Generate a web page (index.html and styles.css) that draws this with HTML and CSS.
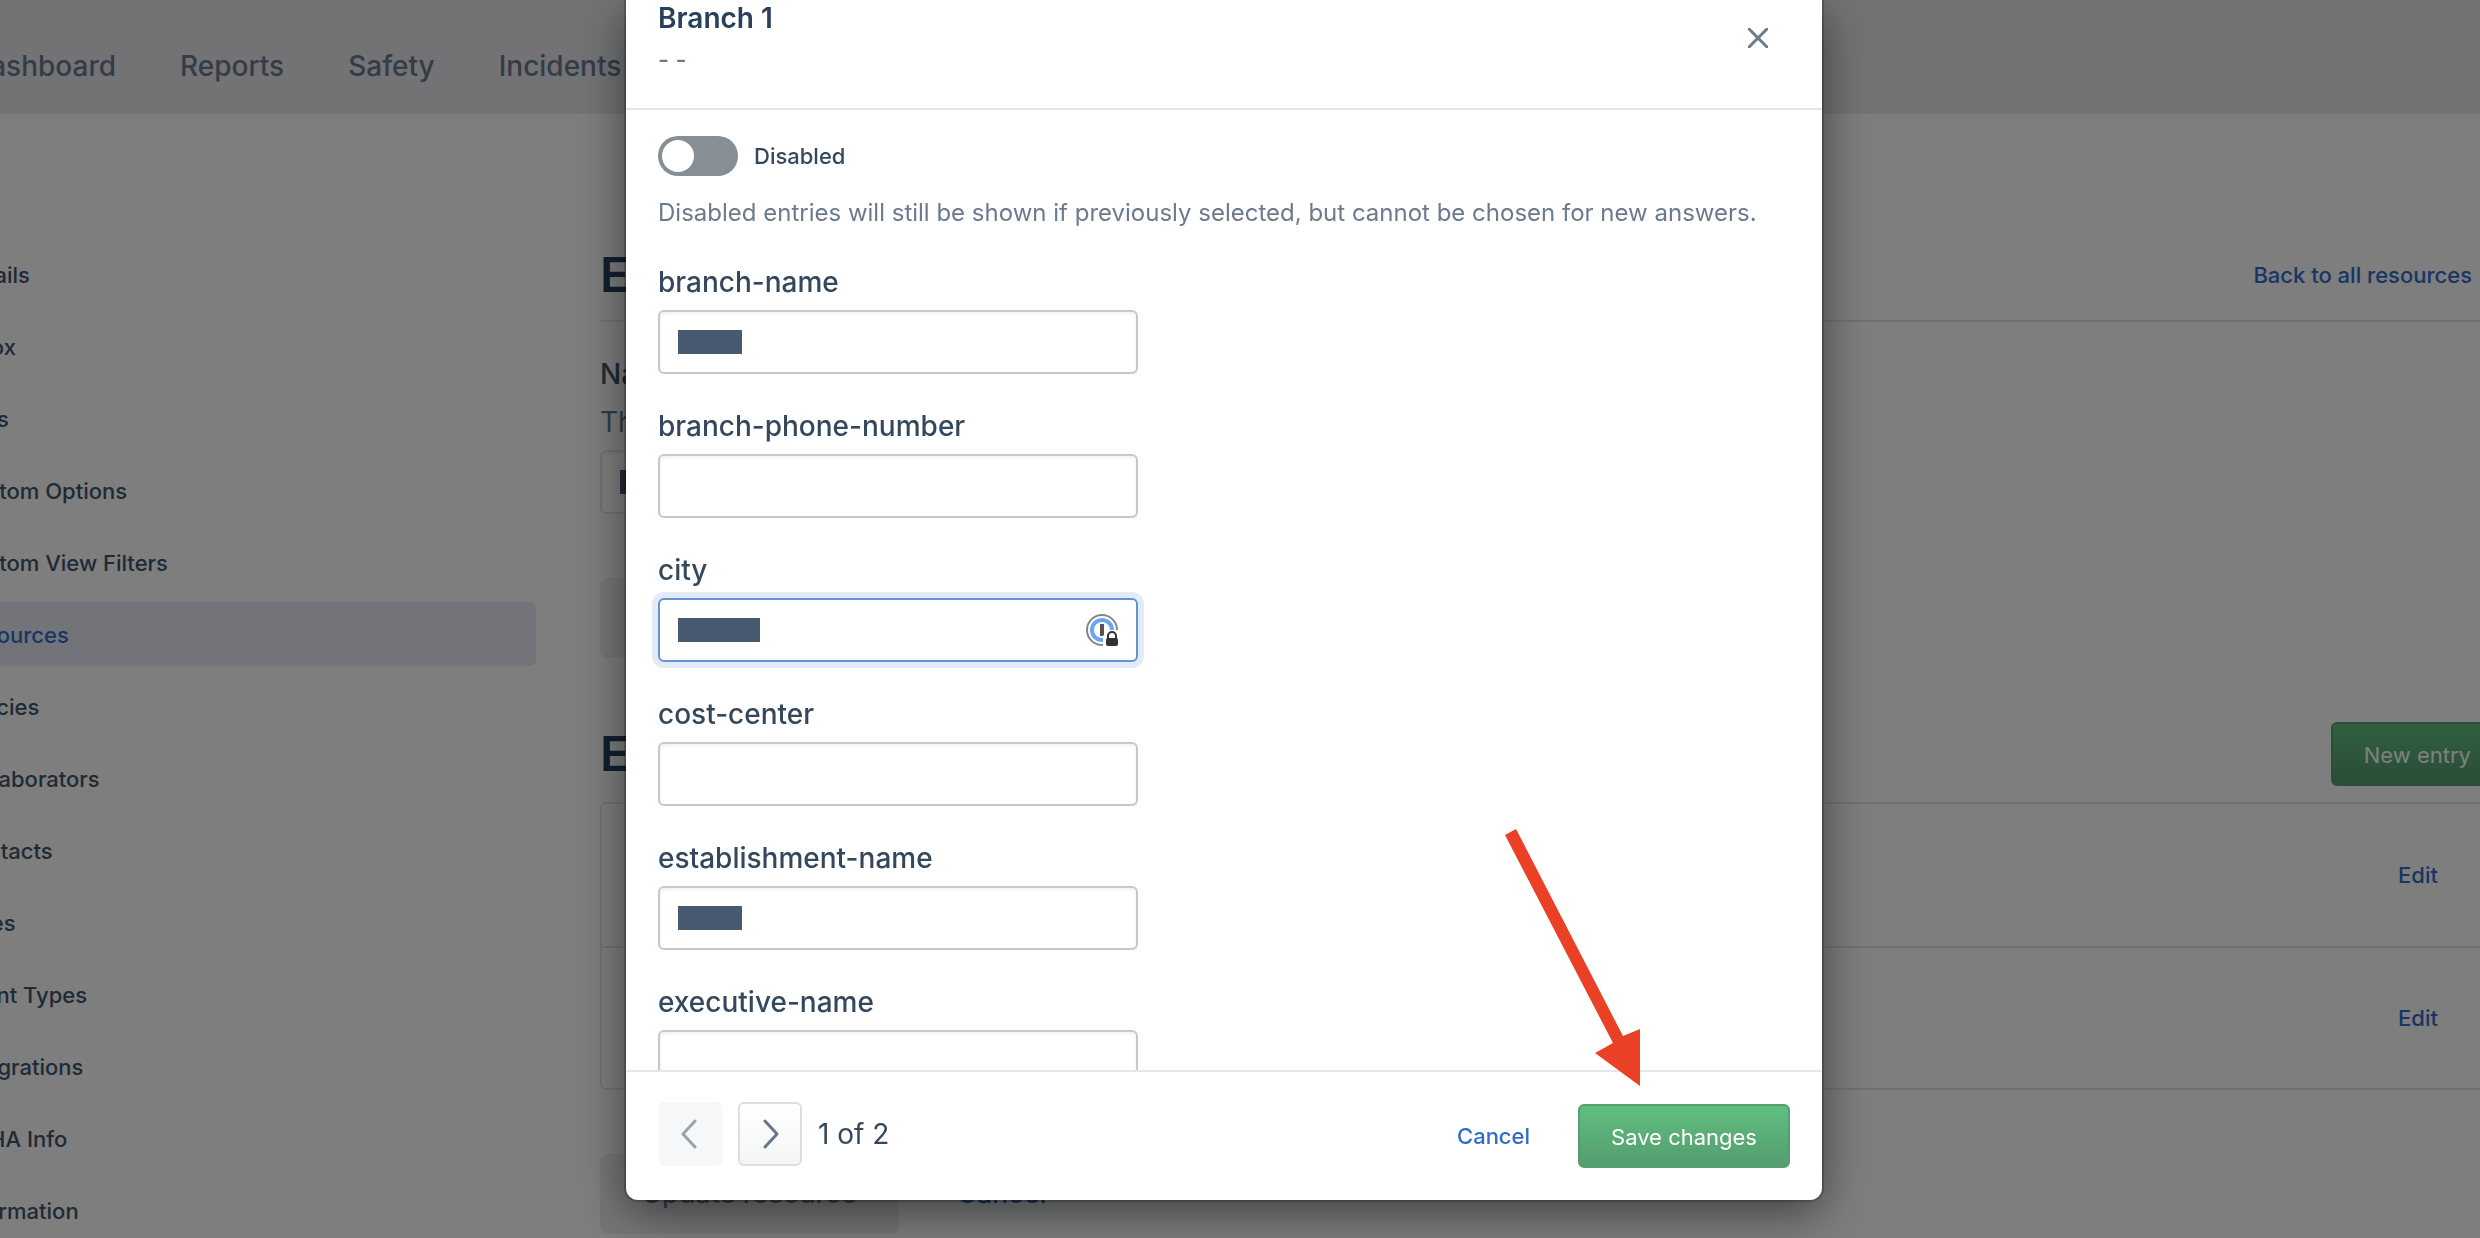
FILE: index.html
```html
<!DOCTYPE html>
<html lang="en">
<head>
<meta charset="utf-8">
<title>Edit resource entry</title>
<link rel="stylesheet" href="styles.css">
</head>
<body>
<div class="page">
  <header class="topbar">
    <nav class="topnav">
      <a href="#">Dashboard</a>
      <a href="#">Reports</a>
      <a href="#">Safety</a>
      <a href="#">Incidents</a>
    </nav>
  </header>
  <div class="layout">
    <nav class="sidebar">
      <a href="#">Details</a>
      <a href="#">Inbox</a>
      <a href="#">Tags</a>
      <a href="#">Custom Options</a>
      <a href="#">Custom View Filters</a>
      <a href="#" class="active">Resources</a>
      <a href="#">Policies</a>
      <a href="#">Collaborators</a>
      <a href="#">Contacts</a>
      <a href="#">Roles</a>
      <a href="#">Event Types</a>
      <a href="#">Integrations</a>
      <a href="#">OSHA Info</a>
      <a href="#">Information</a>
    </nav>
    <main class="content">
      <div class="content-head">
        <h1>Edit</h1>
        <a href="#" class="link">Back to all resources</a>
      </div>
      <div class="name-field">
        <label for="resource-name">Name</label>
        <p>The</p>
        <div class="input-wrap">
          <input id="resource-name" type="text" class="input">
          <span class="mask"></span>
        </div>
      </div>
      <button type="button" class="btn-muted" disabled>Update</button>
      <div class="entries-head">
        <h2>Entries</h2>
        <button type="button" class="btn-green">New entry</button>
      </div>
      <ul class="entries">
        <li><a href="#" class="link">Edit</a></li>
        <li><a href="#" class="link">Edit</a></li>
      </ul>
      <div class="content-actions">
        <button type="button" class="btn-muted" disabled>Update resource</button>
        <a href="#" class="link link-large">Cancel</a>
      </div>
    </main>
  </div>
</div>

<div class="overlay">
  <section class="modal" role="dialog" aria-labelledby="modal-title">
    <header class="modal-head">
      <div>
        <h2 id="modal-title">Branch 1</h2>
        <p>- -</p>
      </div>
      <button type="button" class="close" aria-label="Close">
        <svg width="20" height="20" viewBox="0 0 20 20" fill="none" stroke="currentColor" stroke-width="3" stroke-linecap="round"><path d="M1 1 19 19M19 1 1 19"/></svg>
      </button>
    </header>
    <form class="modal-body">
      <label class="toggle"><input type="checkbox" role="switch"><span>Disabled</span></label>
      <p class="help">Disabled entries will still be shown if previously selected, but cannot be chosen for new answers.</p>
      <div class="field">
        <label for="branch-name">branch-name</label>
        <div class="input-wrap"><input id="branch-name" type="text" class="input"><span class="mask"></span></div>
      </div>
      <div class="field">
        <label for="branch-phone">branch-phone-number</label>
        <div class="input-wrap"><input id="branch-phone" type="text" class="input"></div>
      </div>
      <div class="field">
        <label for="city">city</label>
        <div class="input-wrap">
          <input id="city" type="text" class="input focused">
          <span class="mask mask-wide"></span>
          <svg class="vault" width="34" height="34" viewBox="0 0 34 34" fill="none">
            <circle cx="16" cy="16" r="15" stroke="#858585" stroke-width="2"/>
            <circle cx="16" cy="16" r="10" stroke="#6aa3f8" stroke-width="4"/>
            <path d="M16 10v12" stroke="#555" stroke-width="4"/>
            <path d="M17 34V22l5-6h12v18z" fill="#fff"/>
            <path d="M22 25v-3a4 4 0 0 1 8 0v3" stroke="#333" stroke-width="2"/>
            <rect x="20" y="24" width="12" height="8" rx="2" fill="#333"/>
          </svg>
        </div>
      </div>
      <div class="field">
        <label for="cost-center">cost-center</label>
        <div class="input-wrap"><input id="cost-center" type="text" class="input"></div>
      </div>
      <div class="field">
        <label for="establishment">establishment-name</label>
        <div class="input-wrap"><input id="establishment" type="text" class="input"><span class="mask"></span></div>
      </div>
      <div class="field">
        <label for="executive">executive-name</label>
        <div class="input-wrap"><input id="executive" type="text" class="input"></div>
      </div>
    </form>
    <footer class="modal-foot">
      <div class="pager">
        <button type="button" aria-label="Previous" disabled>
          <svg width="18" height="30" viewBox="0 0 18 30" fill="none" stroke="currentColor" stroke-width="3" stroke-linecap="round" stroke-linejoin="round"><path d="M14 2 2 15l12 13"/></svg>
        </button>
        <button type="button" aria-label="Next">
          <svg width="18" height="30" viewBox="0 0 18 30" fill="none" stroke="currentColor" stroke-width="3" stroke-linecap="round" stroke-linejoin="round"><path d="M4 2l12 13L4 28"/></svg>
        </button>
        <span>1 of 2</span>
      </div>
      <div class="actions">
        <a href="#" class="link">Cancel</a>
        <button type="button" class="btn-green">Save changes</button>
      </div>
    </footer>
    <svg class="arrow" width="140" height="260" viewBox="0 0 140 260" fill="#ea4126">
      <path d="M5 7 16 1 123 208 140 201v57L95 225 113 215z"/>
    </svg>
  </section>
</div>
</body>
</html>
```
FILE: styles.css
```css
* {
  box-sizing: border-box;
}

body {
  margin: 0;
  height: 100vh;
  overflow: hidden;
  background: #fafcfb;
  color: #40546c;
  font-family: Inter, "Liberation Sans", sans-serif;
  font-size: 24px;
  line-height: 32px;
}

h1, h2, p, ul {
  margin: 0;
  padding: 0;
}

h1, h2 {
  color: #28405c;
  font-weight: 600;
}

a {
  color: inherit;
  text-decoration: none;
}

button, input {
  margin: 0;
  font: inherit;
}

.link {
  color: #316cc8;
  font-size: 22px;
  font-weight: 500;
}

.page {
  height: 100vh;
  overflow: hidden;
}

.topbar {
  background: #e6e7ea;
}

.topnav {
  display: flex;
  gap: 64px;
  height: 114px;
  align-items: center;
  margin-left: -30px;
  padding-top: 18px;
  color: #68788f;
  font-size: 28px;
  font-weight: 500;
}

.layout {
  display: grid;
  grid-template-columns: 612px 1fr;
  gap: 64px;
  margin: 128px -24px 0 -76px;
}

.sidebar {
  display: flex;
  flex-direction: column;
  gap: 8px;
}

.sidebar a {
  padding: 17px 34px 15px;
  border-radius: 6px;
  font-size: 22px;
  font-weight: 500;
}

.sidebar .active {
  background: #e5e9f2;
  color: #316cc8;
}

.content-head {
  display: flex;
  justify-content: space-between;
  align-items: center;
  height: 80px;
  padding: 0 32px 12px 0;
  border-bottom: 2px solid #e3e4e4;
}

h1, .entries-head h2 {
  font-size: 48px;
}

.name-field {
  padding: 36px 0 64px;
}

.name-field label {
  display: block;
  font-size: 28px;
  font-weight: 500;
}

.name-field p {
  margin: 16px 0 12px;
  color: #66788c;
  font-size: 28px;
}

.input-wrap {
  position: relative;
  width: 480px;
}

.input {
  display: block;
  width: 100%;
  height: 64px;
  padding: 0 18px;
  border: 2px solid #c2c9d2;
  border-radius: 6px;
  outline: none;
  background: #fff;
  box-shadow: inset 0 2px 4px #eef1f5;
}

.name-field .input {
  border-color: #e3e4e4;
}

.input.focused {
  border-color: #6394d0;
  box-shadow: 0 0 0 6px #e3ebf8;
}

.mask {
  position: absolute;
  top: 20px;
  left: 20px;
  width: 64px;
  height: 24px;
  background: #485a70;
}

.mask-wide {
  width: 82px;
}

.vault {
  position: absolute;
  top: 16px;
  right: 18px;
}

.btn-muted {
  height: 80px;
  padding: 0 42px;
  border: 0;
  border-radius: 8px;
  background: #ecedf0;
  color: #727c8a;
  font-size: 27px;
  font-weight: 500;
}

.entries-head {
  display: flex;
  justify-content: space-between;
  align-items: center;
  margin-top: 64px;
  padding-bottom: 16px;
}

.btn-green {
  height: 64px;
  padding: 2px 31px 0;
  border: 2px solid #55a071;
  border-radius: 6px;
  background: linear-gradient(#5fbf80, #559c6e);
  color: #fff;
  font-size: 22px;
}

.entries {
  border: 2px solid #e3e4e4;
  border-radius: 6px;
  list-style: none;
}

.entries li {
  display: flex;
  justify-content: flex-end;
  align-items: center;
  height: 142px;
  padding-right: 64px;
}

.entries li + li {
  border-top: 2px solid #e3e4e4;
}

.content-actions {
  display: flex;
  align-items: center;
  gap: 58px;
  margin-top: 64px;
}

.link-large {
  font-size: 27px;
}

/* Dialog */
.overlay {
  position: fixed;
  inset: 0;
  display: flex;
  justify-content: center;
  padding: 0 32px 38px 0;
  background: rgba(0, 0, 0, 0.5);
}

.modal {
  position: relative;
  display: flex;
  flex-direction: column;
  width: 1196px;
  height: 100%;
  border-radius: 0 0 12px 12px;
  background: #fff;
  box-shadow: 0 0 0 2px rgba(0, 0, 0, 0.2), 0 12px 48px rgba(0, 0, 0, 0.5);
}

.modal-head {
  display: flex;
  justify-content: space-between;
  padding: 2px 52px 32px 32px;
  border-bottom: 2px solid #e4e4e6;
}

.modal-head h2 {
  font-size: 28px;
}

.modal-head p {
  margin-top: 10px;
  color: #6b7c92;
  font-weight: 500;
}

.close {
  align-self: flex-start;
  display: flex;
  margin-top: 24px;
  padding: 2px;
  border: 0;
  background: none;
  color: #6b7a8d;
}

.modal-body {
  flex: 1;
  overflow: hidden;
  padding: 26px 32px 0;
}

.toggle {
  display: flex;
  align-items: center;
  gap: 16px;
  height: 40px;
  color: #34475c;
  font-size: 22px;
  font-weight: 500;
}

.toggle input {
  appearance: none;
  width: 80px;
  height: 40px;
  padding: 4px;
  border-radius: 20px;
  background: #878e94;
}

.toggle input::before {
  content: "";
  display: block;
  width: 32px;
  height: 32px;
  border-radius: 50%;
  background: #fff;
}

.help {
  margin: 21px 0 37px;
  color: #6b7a8d;
}

.field {
  margin-bottom: 36px;
}

.field label {
  display: block;
  margin-bottom: 12px;
  color: #34475c;
  font-size: 28px;
  font-weight: 500;
}

.modal-foot {
  display: flex;
  justify-content: space-between;
  padding: 30px 32px 32px;
  border-top: 2px solid #e4e6ec;
}

.pager {
  display: flex;
  align-items: center;
  gap: 16px;
  height: 64px;
  color: #34475c;
  font-size: 28px;
}

.pager button {
  display: flex;
  justify-content: center;
  align-items: center;
  width: 64px;
  height: 64px;
  border: 2px solid #dcdfe4;
  border-radius: 6px;
  background: linear-gradient(#fff, #f4f5f5);
  color: #66778c;
}

.pager button:disabled {
  border-color: #f5f7f9;
  background: #f5f7f9;
  color: #98a2b0;
}

.actions {
  display: flex;
  align-items: center;
  gap: 48px;
  padding-top: 2px;
}

.arrow {
  position: absolute;
  right: 182px;
  bottom: 112px;
}
```
